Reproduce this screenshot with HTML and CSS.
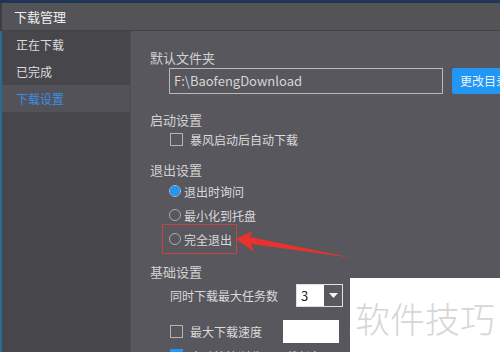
FILE: index.html
```html
<!DOCTYPE html>
<html lang="zh-CN">
<head>
<meta charset="utf-8">
<link rel="stylesheet" href="styles.css">
</head>
<body>
<div class="window">
  <div class="titlebar">下载管理</div>
  <div class="main">
    <aside class="sidebar">
      <div class="nav-item">正在下载</div>
      <div class="nav-item">已完成</div>
      <div class="nav-item active">下载设置</div>
    </aside>
    <section class="content">
      <div class="sec-title first">默认文件夹</div>
      <div class="folder-row">
        <div class="path-input">F:\BaofengDownload</div>
        <div class="btn">更改目录</div>
      </div>

      <div class="sec-title s2">启动设置</div>
      <div class="opt check-row"><span class="checkbox"></span><span class="lbl">暴风启动后自动下载</span></div>

      <div class="sec-title s3">退出设置</div>
      <div class="opt radio-row"><span class="radio on"></span><span class="lbl">退出时询问</span></div>
      <div class="opt radio-row"><span class="radio"></span><span class="lbl">最小化到托盘</span></div>
      <div class="opt radio-row marked"><span class="radio"></span><span class="lbl">完全退出</span><span class="mark-box"></span></div>

      <div class="sec-title s4">基础设置</div>
      <div class="opt select-row">
        <span class="lbl-plain">同时下载最大任务数</span>
        <div class="select"><span class="sel-val">3</span><span class="sel-btn"><svg width="9" height="5" viewBox="0 0 9 5"><path d="M0 0H9L4.5 5Z" fill="#f2f2f2"/></svg></span></div>
      </div>
      <div class="opt speed-row"><span class="checkbox"></span><span class="lbl wide">最大下载速度</span><span class="speed-input"></span><span class="unit">KB/s</span></div>
      <div class="opt last-row"><span class="checkbox blue"></span><span class="lbl">自动接管浏览器下载任务</span></div>
    </section>
  </div>

  <svg class="arrow" width="500" height="352" viewBox="0 0 500 352">
    <polygon points="236,239 252,231 250,237 353,258 251,244 254,252" fill="#e8322e"/>
  </svg>
  <div class="watermark">软件技巧</div>
</div>
</body>
</html>
```

FILE: styles.css
```css
* { box-sizing: border-box; }
html, body { margin: 0; padding: 0; }
body {
  width: 500px;
  height: 352px;
  overflow: hidden;
  background: #58575d;
  font-family: "Noto Sans CJK SC", "Noto Sans", sans-serif;
}
.window {
  position: relative;
  width: 500px;
  height: 352px;
  overflow: hidden;
  border-top: 3px solid #1c3654;
  display: flex;
  flex-direction: column;
}
.titlebar {
  height: 28px;
  flex: none;
  background: #535358;
  border-bottom: 1px solid #434247;
  color: #efefef;
  font-size: 13px;
  line-height: 27px;
  padding-left: 12px;
  border-left: 2px solid #3b3d44;
}
.main {
  flex: 1;
  display: flex;
  min-height: 0;
}
.sidebar {
  width: 131px;
  flex: none;
  background: #47464b;
  border-left: 2px solid #2c6a90;
  border-right: 1px solid #4f4e54;
}
.nav-item {
  height: 27px;
  line-height: 27px;
  padding-left: 14px;
  font-size: 12px;
  color: #dcdcdc;
}
.nav-item.active {
  background: #535258;
  color: #3a8fe0;
}
.content {
  flex: 1;
  background: #58575d;
  padding-left: 19px;
  padding-top: 18px;
  min-width: 0;
  overflow: hidden;
}
.sec-title {
  font-size: 13px;
  line-height: 18px;
  height: 18px;
  color: #d2d2d2;
}
.sec-title.s2 { margin-top: 17px; }
.sec-title.s3 { margin-top: 12px; }
.sec-title.s4 { margin-top: 12px; }
.folder-row {
  display: flex;
  margin-top: 1px;
  margin-left: 19px;
  height: 26px;
  gap: 9px;
}
.path-input {
  width: 274px;
  height: 26px;
  border: 1px solid #b9b9bd;
  color: #d6d6d6;
  font-size: 13px;
  line-height: 24px;
  padding-left: 4px;
  flex: none;
}
.btn {
  flex: none;
  width: 80px;
  height: 26px;
  background: #2196f3;
  border-radius: 2px;
  color: #e6f2ff;
  font-size: 12px;
  line-height: 26px;
  padding-left: 8px;
}
.opt {
  display: flex;
  align-items: center;
  margin-left: 20px;
  font-size: 12px;
  color: #dadada;
}
.check-row { height: 20px; }
.radio-row { height: 24px; }
.checkbox {
  width: 13px;
  height: 13px;
  border: 1px solid #b4b4b8;
  flex: none;
}
.checkbox.blue {
  background: #2196f3;
  border-color: #2196f3;
}
.check-row .lbl, .speed-row .lbl, .last-row .lbl { margin-left: 7px; }
.radio {
  width: 12px;
  height: 12px;
  border-radius: 50%;
  border: 1px solid #a9a9ad;
  flex: none;
  margin-left: -1px;
}
.radio.on {
  border-color: #8fbfec;
  background: radial-gradient(circle, #2196f3 0 4px, #2196f3 4px 4.6px, transparent 4.8px);
}
.radio-row .lbl { margin-left: 3px; }
.marked { position: relative; }
.mark-box {
  position: absolute;
  left: -8px;
  top: -3px;
  width: 75px;
  height: 30px;
  border: 1px solid #c4443f;
}
.select-row {
  margin-top: 3px;
  height: 23px;
}
.lbl-plain { width: 126px; flex: none; }
.select {
  display: flex;
  width: 47px;
  height: 23px;
  border: 1px solid #e0e0e0;
}
.sel-val {
  width: 27px;
  background: #ffffff;
  color: #222;
  font-size: 13px;
  line-height: 21px;
  padding-left: 4px;
}
.sel-btn {
  flex: 1;
  background: #59585e;
  display: flex;
  align-items: center;
  justify-content: center;
}
.speed-row {
  margin-top: 13px;
  height: 23px;
}
.speed-row .lbl.wide { width: 93px; flex: none; }
.speed-input {
  width: 56px;
  height: 23px;
  background: #ffffff;
  flex: none;
}
.unit {
  margin-left: 10px;
  color: #cfcfcf;
  font-size: 12px;
}
.last-row {
  margin-top: 6px;
  height: 20px;
  align-items: flex-start;
  line-height: 16px;
}
.arrow {
  position: absolute;
  left: 0;
  top: -3px;
  pointer-events: none;
}
.watermark {
  position: absolute;
  left: 350px;
  top: 275px;
  width: 150px;
  height: 80px;
  background: #ffffff;
  color: #d6d6d6;
  font-size: 35px;
  font-weight: 300;
  line-height: 80px;
  padding-left: 5px;
  white-space: nowrap;
}
```
